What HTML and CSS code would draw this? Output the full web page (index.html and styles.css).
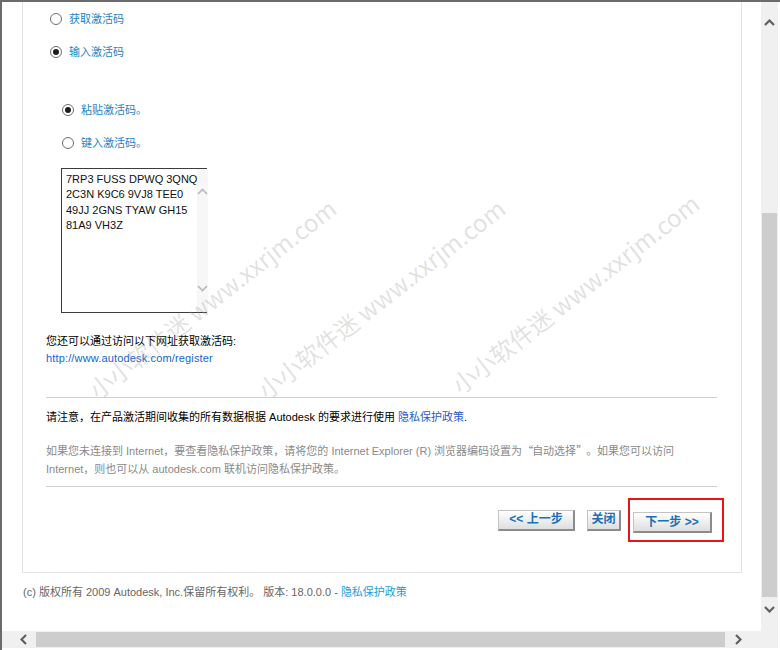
FILE: index.html
```html
<!DOCTYPE html>
<html lang="zh-CN">
<head>
<meta charset="utf-8">
<title>Autodesk 激活</title>
<link rel="stylesheet" href="styles.css">
</head>
<body>
<div class="window">
  <div class="viewport">
    <div class="panel">
      <div class="opt opt-first"><span class="radio"></span><span class="label">获取激活码</span></div>
      <div class="opt opt-second"><span class="radio checked"></span><span class="label">输入激活码</span></div>
      <div class="sub">
        <div class="opt sub-first"><span class="radio checked"></span><span class="label">粘贴激活码。</span></div>
        <div class="opt sub-second"><span class="radio"></span><span class="label">键入激活码。</span></div>
        <div class="codebox">
          <div class="code">7RP3 FUSS DPWQ 3QNQ<br>2C3N K9C6 9VJ8 TEE0<br>49JJ 2GNS TYAW GH15<br>81A9 VH3Z</div>
          <div class="codebar">
            <svg class="tchev" width="11" height="7" viewBox="0 0 11 7"><polyline points="1,6 5.5,1.5 10,6" fill="none" stroke="#b8b8b8" stroke-width="1.6"/></svg>
            <svg class="tchev" width="11" height="7" viewBox="0 0 11 7"><polyline points="1,1 5.5,5.5 10,1" fill="none" stroke="#b8b8b8" stroke-width="1.6"/></svg>
          </div>
        </div>
      </div>
      <p class="alt">您还可以通过访问以下网址获取激活码:</p>
      <p class="url"><a class="link-url" href="#">http://www.autodesk.com/register</a></p>
      <hr class="rule rule-top">
      <p class="notice">请注意，在产品激活期间收集的所有数据根据 Autodesk 的要求进行使用 <a class="link-privacy" href="#">隐私保护政策</a>.</p>
      <p class="offline">如果您未连接到 Internet，要查看隐私保护政策，请将您的 Internet Explorer (R) 浏览器编码设置为<span class="q">“</span>自动选择<span class="q">”</span>。如果您可以访问<br>Internet，则也可以从 autodesk.com 联机访问隐私保护政策。</p>
      <hr class="rule rule-bottom">
      <div class="actions">
        <button class="btn btn-back">&lt;&lt; 上一步</button>
        <button class="btn btn-close">关闭</button>
        <div class="highlight"><button class="btn btn-next">下一步 &gt;&gt;</button></div>
      </div>
    </div>
    <p class="footer">(c) 版权所有 2009 Autodesk, Inc.保留所有权利。 版本: 18.0.0.0 - <a class="link-foot" href="#">隐私保护政策</a></p>
    <div class="watermark">
      <span class="wm wm-a">小小软件迷 www.xxrjm.com</span>
      <span class="wm wm-b">小小软件迷 www.xxrjm.com</span>
      <span class="wm wm-c">小小软件迷 www.xxrjm.com</span>
    </div>
  </div>
  <div class="vscroll">
    <svg class="vchev-up" width="11" height="7" viewBox="0 0 11 7"><polyline points="1,6 5.5,1.5 10,6" fill="none" stroke="#606060" stroke-width="2.2"/></svg>
    <div class="vthumb"></div>
    <svg class="vchev-down" width="11" height="7" viewBox="0 0 11 7"><polyline points="1,1 5.5,5.5 10,1" fill="none" stroke="#606060" stroke-width="2.2"/></svg>
  </div>
  <div class="blank-col"></div>
  <div class="hscroll">
    <svg class="hchev-left" width="7" height="11" viewBox="0 0 7 11"><polyline points="6,1 1.5,5.5 6,10" fill="none" stroke="#606060" stroke-width="2.2"/></svg>
    <div class="hthumb"></div>
    <svg class="hchev-right" width="7" height="11" viewBox="0 0 7 11"><polyline points="1,1 5.5,5.5 1,10" fill="none" stroke="#606060" stroke-width="2.2"/></svg>
  </div>
  <div class="corner"></div>
  <div class="blank-col"></div>
</div>
</body>
</html>
```

FILE: styles.css
```css
html, body {
  margin: 0;
  padding: 0;
  background: #ffffff;
}

body {
  font-family: "Liberation Sans", "Noto Sans CJK SC", sans-serif;
  font-size: 11px;
  color: #000;
}

.window {
  width: 778px;
  height: 648px;
  border-top: 2px solid #6b6b6b;
  border-left: 2px solid #6b6b6b;
  display: grid;
  grid-template-columns: 759px 17px 2px;
  grid-template-rows: 629px 17px 2px;
  overflow: hidden;
}

.viewport {
  position: relative;
  overflow: hidden;
  background: #fff;
}

.panel {
  box-sizing: border-box;
  width: 720px;
  margin-left: 20px;
  border: 1px solid #e2e2e2;
  border-top: none;
  padding: 7px 24px 30px 23px;
}

.opt {
  height: 20px;
  display: flex;
  align-items: center;
  gap: 7px;
  padding-left: 4px;
}

.opt-second { margin-top: 13px; }

.radio {
  box-sizing: border-box;
  width: 12px;
  height: 12px;
  border: 1px solid #6f6f6f;
  border-radius: 50%;
  background: #fff;
  display: flex;
  align-items: center;
  justify-content: center;
  flex: none;
}

.radio.checked::after {
  content: "";
  width: 6px;
  height: 6px;
  border-radius: 50%;
  background: #1e1e1e;
}

.label {
  color: #1a84c6;
  font-size: 11px;
  line-height: 20px;
}

.sub {
  margin-top: 38px;
  padding-left: 15px;
}

.sub .opt { padding-left: 1px; }

.sub-second { margin-top: 13px; }

.codebox {
  box-sizing: border-box;
  margin-top: 15px;
  width: 146px;
  height: 145px;
  border: 1px solid #3c3c3c;
  display: flex;
}

.code {
  flex: 1;
  padding: 3px 0 0 4px;
  font-size: 11px;
  line-height: 15.4px;
  color: #111;
  white-space: nowrap;
}

.codebar {
  width: 17px;
  background: #f7f7f7;
  display: flex;
  flex-direction: column;
  align-items: center;
  justify-content: space-between;
  padding: 19px 0 20px;
}

.tchev { display: block; }

.alt {
  margin: 20px 0 0;
  line-height: 17px;
}

.url {
  margin: 0;
  line-height: 17px;
}

.link-url {
  color: #1565d0;
  text-decoration: none;
  letter-spacing: 0.15px;
}

.rule {
  border: 0;
  border-top: 1px solid #d2d2d2;
  height: 0;
  margin: 0;
}

.rule-top { margin-top: 30px; }

.notice {
  margin: 10px 0 0;
  line-height: 18px;
}

.link-privacy {
  color: #1a5ccb;
  text-decoration: none;
}

.offline {
  margin: 15px 0 0;
  line-height: 18px;
  color: #8a8a8a;
}

.q {
  font-family: "Noto Sans CJK SC", sans-serif;
  display: inline-block;
  width: 10px;
  text-align: center;
}

.rule-bottom { margin-top: 8px; }

.actions {
  margin-top: 11px;
  margin-right: -7px;
  display: flex;
  justify-content: flex-end;
  align-items: center;
}

.btn {
  box-sizing: border-box;
  height: 21px;
  padding: 0;
  font-family: "Liberation Sans", "Noto Sans CJK SC", sans-serif;
  font-size: 12px;
  font-weight: bold;
  color: #1b6fb8;
  text-align: center;
  background: linear-gradient(#ffffff, #dedede);
  border-top: 1px solid #c4c4c4;
  border-left: 1px solid #c4c4c4;
  border-right: 2px solid #8c8c8c;
  border-bottom: 2px solid #8c8c8c;
  line-height: 17px;
}

.btn-back { width: 77px; }

.btn-close {
  width: 34px;
  margin-left: 12px;
}

.btn-next { width: 79px; }

.highlight {
  margin-left: 7px;
  border: 2px solid #e8141c;
  padding: 12px 10px 7px 3px;
  display: flex;
}

.footer {
  margin: 10px 0 0 21px;
  line-height: 18px;
  color: #666;
}

.link-foot {
  color: #1e9cd8;
  text-decoration: none;
}

.watermark {
  position: absolute;
  inset: 0;
  pointer-events: none;
}

.wm {
  position: absolute;
  font-family: "Noto Sans CJK SC", sans-serif;
  font-size: 24px;
  line-height: 24px;
  white-space: nowrap;
  color: rgba(150, 150, 150, 0.28);
  transform-origin: 0 100%;
  transform: rotate(-38deg);
}

.wm-a { left: 97px; top: 376px; }
.wm-b { left: 266px; top: 376px; }
.wm-c { left: 460px; top: 371px; }

.vscroll {
  background: #f0f0f0;
  display: flex;
  flex-direction: column;
  align-items: center;
}

.vchev-up { margin-top: 17px; display: block; }

.vthumb {
  width: 15px;
  height: 384px;
  margin-top: 187px;
  background: #cdcdcd;
}

.vchev-down { margin-top: 9px; display: block; }

.hscroll {
  background: #f0f0f0;
  display: flex;
  align-items: center;
}

.hchev-left { margin-left: 18px; display: block; }

.hthumb {
  width: 689px;
  height: 15px;
  margin-left: 9px;
  background: #cdcdcd;
}

.hchev-right { margin-left: 10px; display: block; }

.corner { background: #f0f0f0; }

.blank-col { background: #fff; }
```
